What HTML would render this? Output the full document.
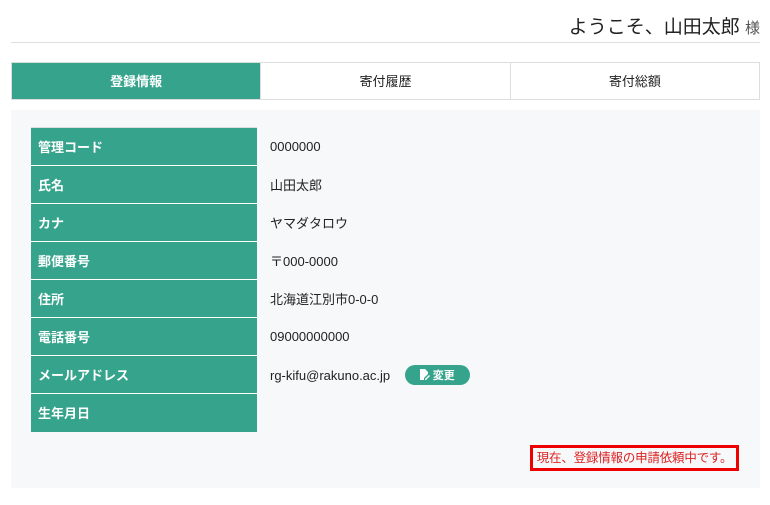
<!DOCTYPE html>
<html><head><meta charset="utf-8"><style>
*{margin:0;padding:0;box-sizing:border-box}
body{width:770px;height:505px;background:#fff;font-family:"Liberation Sans","Noto Sans CJK JP",sans-serif;color:#222;position:relative;overflow:hidden}
.hd{position:absolute;right:10px;top:12px;font-size:19px;color:#222}
.hd small{font-size:15px;color:#555}
.rule{position:absolute;left:11px;top:42px;width:749px;height:1px;background:#ddd}
.tabs{position:absolute;left:11px;top:62px;width:749px;height:38px;display:flex;border:1px solid #ddd}
.tabs div{flex:1;text-align:center;line-height:37px;font-size:13px;border-left:1px solid #ddd}
.tabs div:first-child{background:#36a48c;color:#fff;border-left:none;font-weight:bold}
.panel{position:absolute;left:11px;top:110px;width:749px;height:378px;background:#f7f8fa}
table{position:absolute;left:20px;top:17px;border-collapse:collapse}
td{height:38px;font-size:13px}
td.l{width:226px;background:#36a48c;color:#fff;font-weight:bold;padding-left:7px;border-top:1px solid #fff}
tr:first-child td.l{border-top:1px solid #ddd}
td.v{padding-left:13px}
.btn{display:inline-block;background:#36a48c;color:#fff;font-size:11px;font-weight:bold;border-radius:10px;padding:2px 15px 2px 15px;margin-left:11px;vertical-align:1px}
.note{position:absolute;left:519px;top:335px;width:209px;height:26px;border:3px solid #e00;color:#d22;font-size:12.5px;line-height:20px;text-align:center;white-space:nowrap;letter-spacing:-0.2px}
</style></head><body>
<div class="hd">ようこそ、山田太郎 <small>様</small></div>
<div class="rule"></div>
<div class="tabs"><div>登録情報</div><div>寄付履歴</div><div>寄付総額</div></div>
<div class="panel">
<table>
<tr><td class="l">管理コード</td><td class="v">0000000</td></tr>
<tr><td class="l">氏名</td><td class="v">山田太郎</td></tr>
<tr><td class="l">カナ</td><td class="v">ヤマダタロウ</td></tr>
<tr><td class="l">郵便番号</td><td class="v">〒000-0000</td></tr>
<tr><td class="l">住所</td><td class="v">北海道江別市0-0-0</td></tr>
<tr><td class="l">電話番号</td><td class="v">09000000000</td></tr>
<tr><td class="l">メールアドレス</td><td class="v">rg-kifu@rakuno.ac.jp <span class="btn"><svg width="10" height="11" viewBox="0 0 10 11" style="vertical-align:-1px"><path d="M0 0h5l3 3v2L4 9v2H0z" fill="#fff"/><path d="M5 10l4-4 1 1-4 4H5z" fill="#fff"/></svg> 変更</span></td></tr>
<tr><td class="l">生年月日</td><td class="v"></td></tr>
</table>
<div class="note">現在、登録情報の申請依頼中です。</div>
</div>
</body></html>
